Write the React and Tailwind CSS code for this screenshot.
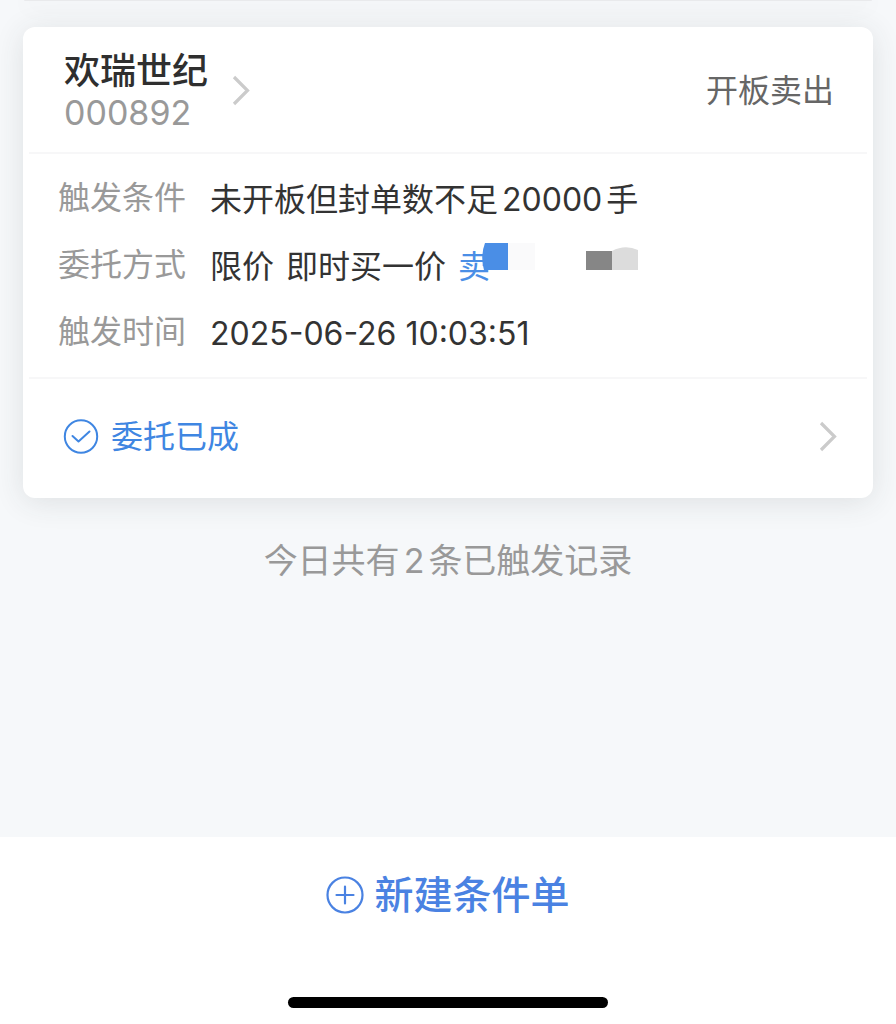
function Chevron() {
  return (
    <svg className="h-8 w-5 shrink-0" viewBox="0 0 20 32" fill="none" stroke="#cbcbcb" strokeWidth="3.2" aria-hidden="true">
      <path d="M2 2 L15.5 15.5 L2 29" />
    </svg>
  );
}

function CheckCircle() {
  return (
    <svg className="size-9 shrink-0" viewBox="0 0 36 36" fill="none" stroke="#3f86e2" strokeWidth="2" aria-hidden="true">
      <circle cx="18" cy="17.5" r="16.2" />
      <path d="M9.5 17 L15.5 22.5 L26.5 12.5" strokeLinecap="round" strokeLinejoin="round" />
    </svg>
  );
}

function PlusCircle() {
  return (
    <svg className="size-10 shrink-0" viewBox="0 0 40 40" fill="none" stroke="#4a82e2" strokeWidth="2.2" aria-hidden="true">
      <circle cx="19" cy="20" r="17.5" />
      <path d="M10.5 20 H27.5 M19 11.5 V28.5" strokeLinecap="round" />
    </svg>
  );
}

function Redaction() {
  return (
    <svg className="absolute bottom-full left-full -mb-6 -ml-2.5 h-7 w-40" viewBox="0 0 160 28" aria-hidden="true">
      <path d="M5 0 H28 V27 H4 Q0 13 5 0 Z" fill="#4a8ee6" />
      <path d="M28 0 H55 V27 H28 Z" fill="#fafafb" />
      <path d="M106 8 H132 V27 H106 Z" fill="#868686" />
      <path d="M132 8 Q145 1 158 7 V27 H132 Z" fill="#dcdcdc" />
    </svg>
  );
}

function Row({ label, children }) {
  return (
    <div className="flex items-center gap-6">
      <dt className="shrink-0 pb-1 text-[#999999]">{label}</dt>
      <dd className="flex whitespace-nowrap text-[#333333]">{children}</dd>
    </div>
  );
}

export default function App() {
  return (
    <div className="flex min-h-screen flex-col overflow-hidden bg-[#f6f8fa] font-['Inter','Noto_Sans_CJK_SC',sans-serif] text-[32px] leading-10">
      <div className="mx-6 h-px rounded-b-xl bg-[#e9eaec] shadow-[0_2px_24px_rgba(50,55,60,0.3)]" />
      <main className="flex-1 px-[23px] pt-[26px]">
        <section className="rounded-xl bg-white px-[6px] shadow-[0_4px_30px_rgba(50,55,60,0.12)]">
          <header className="flex h-[127px] items-center justify-between border-b-2 border-[#f7f7f8] pt-0.5 pr-[33px] pl-[35px]">
            <a href="#stock" className="flex items-center gap-6">
              <div>
                <h1 className="text-[36px] leading-[44px] font-medium text-[#2f2f2f]">欢瑞世纪</h1>
                <p className="text-[34px] leading-10 text-[#999999]">000892</p>
              </div>
              <Chevron />
            </a>
            <span className="text-[#666666]">开板卖出</span>
          </header>
          <dl className="flex flex-col gap-[23px] border-b-2 border-[#f7f7f8] pt-6 pb-[21px] pl-[29px]">
            <Row label="触发条件">
              <span>
                未开板但封单数不足<span className="mx-1">20000</span>手
              </span>
            </Row>
            <Row label="委托方式">
              <span className="flex gap-3">
                <span>限价</span>
                <span>即时买一价</span>
                <span className="relative text-[#4a8ee6]">
                  卖
                  <Redaction />
                </span>
              </span>
            </Row>
            <Row label="触发时间">2025-06-26 10:03:51</Row>
          </dl>
          <a href="#order" className="flex h-[119px] items-center justify-between pr-[28px] pb-1 pl-[34px] text-[#3f86e2]">
            <span className="flex items-center gap-3">
              <CheckCircle />
              委托已成
            </span>
            <Chevron />
          </a>
        </section>
        <p className="mt-[43px] text-center text-[34px] text-[#999999]">
          今日共有<span className="mx-1">2</span>条已触发记录
        </p>
      </main>
      <footer className="flex h-[187px] flex-col items-center justify-between bg-white pt-[34px] pb-4">
        <button type="button" className="flex items-center gap-2 text-[39px] leading-[48px] font-medium text-[#4a82e2]">
          <PlusCircle />
          新建条件单
        </button>
        <div className="h-[11px] w-80 rounded-full bg-black" />
      </footer>
    </div>
  );
}
